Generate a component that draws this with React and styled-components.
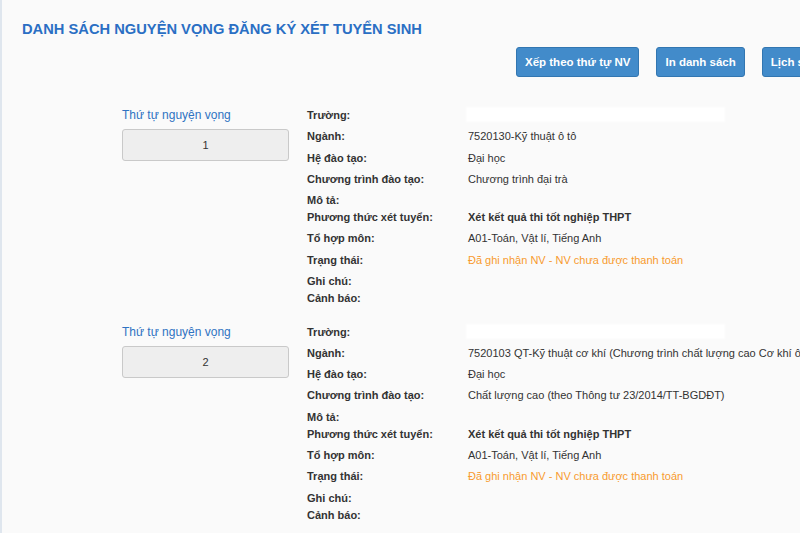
import React from "react";
import styled, { createGlobalStyle } from "styled-components";

const GlobalStyle = createGlobalStyle`
  html, body {
    margin: 0;
    padding: 0;
    background: #fafafa;
    overflow: hidden;
  }
  body {
    font-family: "Liberation Sans", Arial, sans-serif;
    color: #333;
  }
`;

// Data
const wishes = [
  {
    order: 1,
    major: "7520130-Kỹ thuật ô tô",
    level: "Đại học",
    program: "Chương trình đại trà",
    method: "Xét kết quả thi tốt nghiệp THPT",
    combo: "A01-Toán, Vật lí, Tiếng Anh",
    status: "Đã ghi nhận NV - NV chưa được thanh toán",
  },
  {
    order: 2,
    major:
      "7520103 QT-Kỹ thuật cơ khí (Chương trình chất lượng cao Cơ khí ô tô)",
    level: "Đại học",
    program: "Chất lượng cao (theo Thông tư 23/2014/TT-BGDĐT)",
    method: "Xét kết quả thi tốt nghiệp THPT",
    combo: "A01-Toán, Vật lí, Tiếng Anh",
    status: "Đã ghi nhận NV - NV chưa được thanh toán",
  },
];

const App = () => {
  return (
    <>
      <GlobalStyle />
      <Page>
        <Title>DANH SÁCH NGUYỆN VỌNG ĐĂNG KÝ XÉT TUYỂN SINH</Title>
        <Toolbar>
          <Button>Xếp theo thứ tự NV</Button>
          <Button>In danh sách</Button>
          <Button>Lịch sử đăng ký</Button>
        </Toolbar>
        {wishes.map((w) => (
          <Wish key={w.order}>
            <OrderCol>
              <OrderLabel>Thứ tự nguyện vọng</OrderLabel>
              <OrderBox>{w.order}</OrderBox>
            </OrderCol>
            <Details>
              <Row>
                <Label>Trường:</Label>
                <Value>
                  <Redacted />
                </Value>
              </Row>
              <Row>
                <Label>Ngành:</Label>
                <Value>{w.major}</Value>
              </Row>
              <Row>
                <Label>Hệ đào tạo:</Label>
                <Value>{w.level}</Value>
              </Row>
              <Row>
                <Label>Chương trình đào tạo:</Label>
                <Value>{w.program}</Value>
              </Row>
              <Row $compact>
                <Label>Mô tả:</Label>
                <Value />
              </Row>
              <Row>
                <Label>Phương thức xét tuyển:</Label>
                <Value $bold>{w.method}</Value>
              </Row>
              <Row>
                <Label>Tổ hợp môn:</Label>
                <Value>{w.combo}</Value>
              </Row>
              <Row>
                <Label>Trạng thái:</Label>
                <Value $color="#f89a2e">{w.status}</Value>
              </Row>
              <Row $compact>
                <Label>Ghi chú:</Label>
                <Value />
              </Row>
              <Row $compact>
                <Label>Cảnh báo:</Label>
                <Value />
              </Row>
            </Details>
          </Wish>
        ))}
      </Page>
    </>
  );
};

const Page = styled.div`
  min-height: 100vh;
  box-sizing: border-box;
  border-left: 2px solid #dfe6ee;
  padding: 19px 0 0 20px;
`;

const Title = styled.h1`
  margin: 0;
  font-size: 14.7px;
  line-height: 20px;
  font-weight: bold;
  color: #2a6fc4;
  white-space: nowrap;
`;

const Toolbar = styled.div`
  display: flex;
  gap: 17px;
  margin: 8px 0 0 494px;
  white-space: nowrap;
`;

const Button = styled.button`
  flex: none;
  height: 30px;
  padding: 0 8px;
  border: 1px solid #3276b1;
  border-radius: 3px;
  background: #428bca;
  color: #fff;
  font-family: "Liberation Sans", Arial, sans-serif;
  font-size: 11.5px;
  font-weight: bold;
`;

const Wish = styled.div`
  display: flex;
  margin-top: 31px;
  padding-left: 100px;
  & + & {
    margin-top: 16.5px;
  }
`;

const OrderCol = styled.div`
  flex: none;
  width: 167px;
  margin-right: 18px;
`;

const OrderLabel = styled.div`
  font-size: 12px;
  line-height: 14px;
  color: #2f73c2;
`;

const OrderBox = styled.div`
  margin-top: 7px;
  height: 32px;
  box-sizing: border-box;
  display: flex;
  align-items: center;
  justify-content: center;
  border: 1px solid #c9c9c9;
  border-radius: 3px;
  background: #eeeeee;
  font-size: 11px;
  color: #333;
`;

const Details = styled.div`
  display: flex;
  flex-direction: column;
`;

const Row = styled.div`
  display: grid;
  grid-template-columns: 161px auto;
  align-items: start;
  height: ${(p) => (p.$compact ? "17px" : "21.3px")};
  font-size: 11px;
  line-height: 14px;
  white-space: nowrap;
`;

const Label = styled.div`
  font-weight: bold;
  color: #333;
`;

const Value = styled.div`
  color: ${(p) => p.$color || "#333"};
  font-weight: ${(p) => (p.$bold ? "bold" : "normal")};
`;

const Redacted = styled.span`
  display: block;
  width: 259px;
  height: 15px;
  margin: -1px 0 0 -2px;
  background: #fff;
  filter: blur(1px);
`;

export default App;
